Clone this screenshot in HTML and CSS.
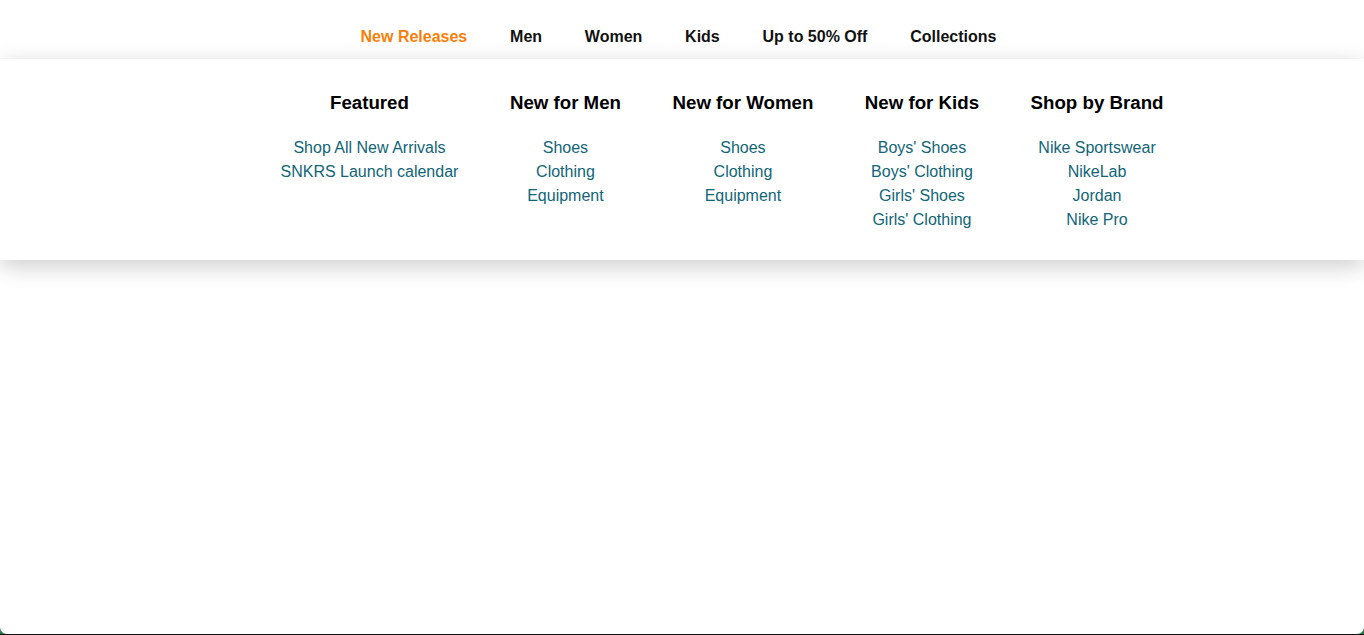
FILE: index.html
```html
<!DOCTYPE html>
<html>
<head>
<meta charset="utf-8">
<link rel="stylesheet" href="styles.css">
</head>
<body>
<div class="frame">
  <div class="page">
    <nav class="topnav">
      <a class="nav-item active">New Releases</a>
      <a class="nav-item">Men</a>
      <a class="nav-item">Women</a>
      <a class="nav-item">Kids</a>
      <a class="nav-item">Up to 50% Off</a>
      <a class="nav-item">Collections</a>
    </nav>
    <div class="mega">
      <div class="col">
        <h3 class="col-title">Featured</h3>
        <a class="link">Shop All New Arrivals</a>
        <a class="link">SNKRS Launch calendar</a>
      </div>
      <div class="col">
        <h3 class="col-title">New for Men</h3>
        <a class="link">Shoes</a>
        <a class="link">Clothing</a>
        <a class="link">Equipment</a>
      </div>
      <div class="col">
        <h3 class="col-title">New for Women</h3>
        <a class="link">Shoes</a>
        <a class="link">Clothing</a>
        <a class="link">Equipment</a>
      </div>
      <div class="col">
        <h3 class="col-title">New for Kids</h3>
        <a class="link">Boys' Shoes</a>
        <a class="link">Boys' Clothing</a>
        <a class="link">Girls' Shoes</a>
        <a class="link">Girls' Clothing</a>
      </div>
      <div class="col">
        <h3 class="col-title">Shop by Brand</h3>
        <a class="link">Nike Sportswear</a>
        <a class="link">NikeLab</a>
        <a class="link">Jordan</a>
        <a class="link">Nike Pro</a>
      </div>
    </div>
  </div>
</div>
</body>
</html>
```
FILE: styles.css
```css
html, body {
  margin: 0;
  padding: 0;
}
body {
  font-family: "Liberation Sans", Arial, Helvetica, sans-serif;
  background: #111;
  height: 635px;
  overflow: hidden;
}
.frame {
  height: 634px;
  background: #2f7a4c;
}
.page {
  height: 634px;
  background: #fff;
  border-radius: 0 0 7px 7px;
  overflow: hidden;
  position: relative;
}
.topnav {
  height: 59px;
  display: flex;
  justify-content: center;
  align-items: center;
  padding-right: 7px;
  box-sizing: border-box;
}
.nav-item {
  font-size: 16px;
  font-weight: bold;
  color: #111;
  padding: 0 21.4px;
  line-height: 20px;
  margin-top: 15px;
}
.nav-item.active {
  color: #fa7f0a;
}
.mega {
  position: relative;
  z-index: 1;
  background: #fff;
  box-shadow: 0 6px 22px rgba(0, 0, 0, 0.2);
  display: flex;
  justify-content: center;
  gap: 51.5px;
  padding: 32px 0 28px 80px;
  height: 201px;
  box-sizing: border-box;
}
.col {
  display: flex;
  flex-direction: column;
  align-items: center;
  text-align: center;
}
.col-title {
  margin: 0 0 21px;
  font-size: 18.7px;
  font-weight: bold;
  line-height: 24px;
  color: #000;
}
.link {
  font-size: 16px;
  line-height: 24px;
  color: #116577;
  white-space: nowrap;
}
```
